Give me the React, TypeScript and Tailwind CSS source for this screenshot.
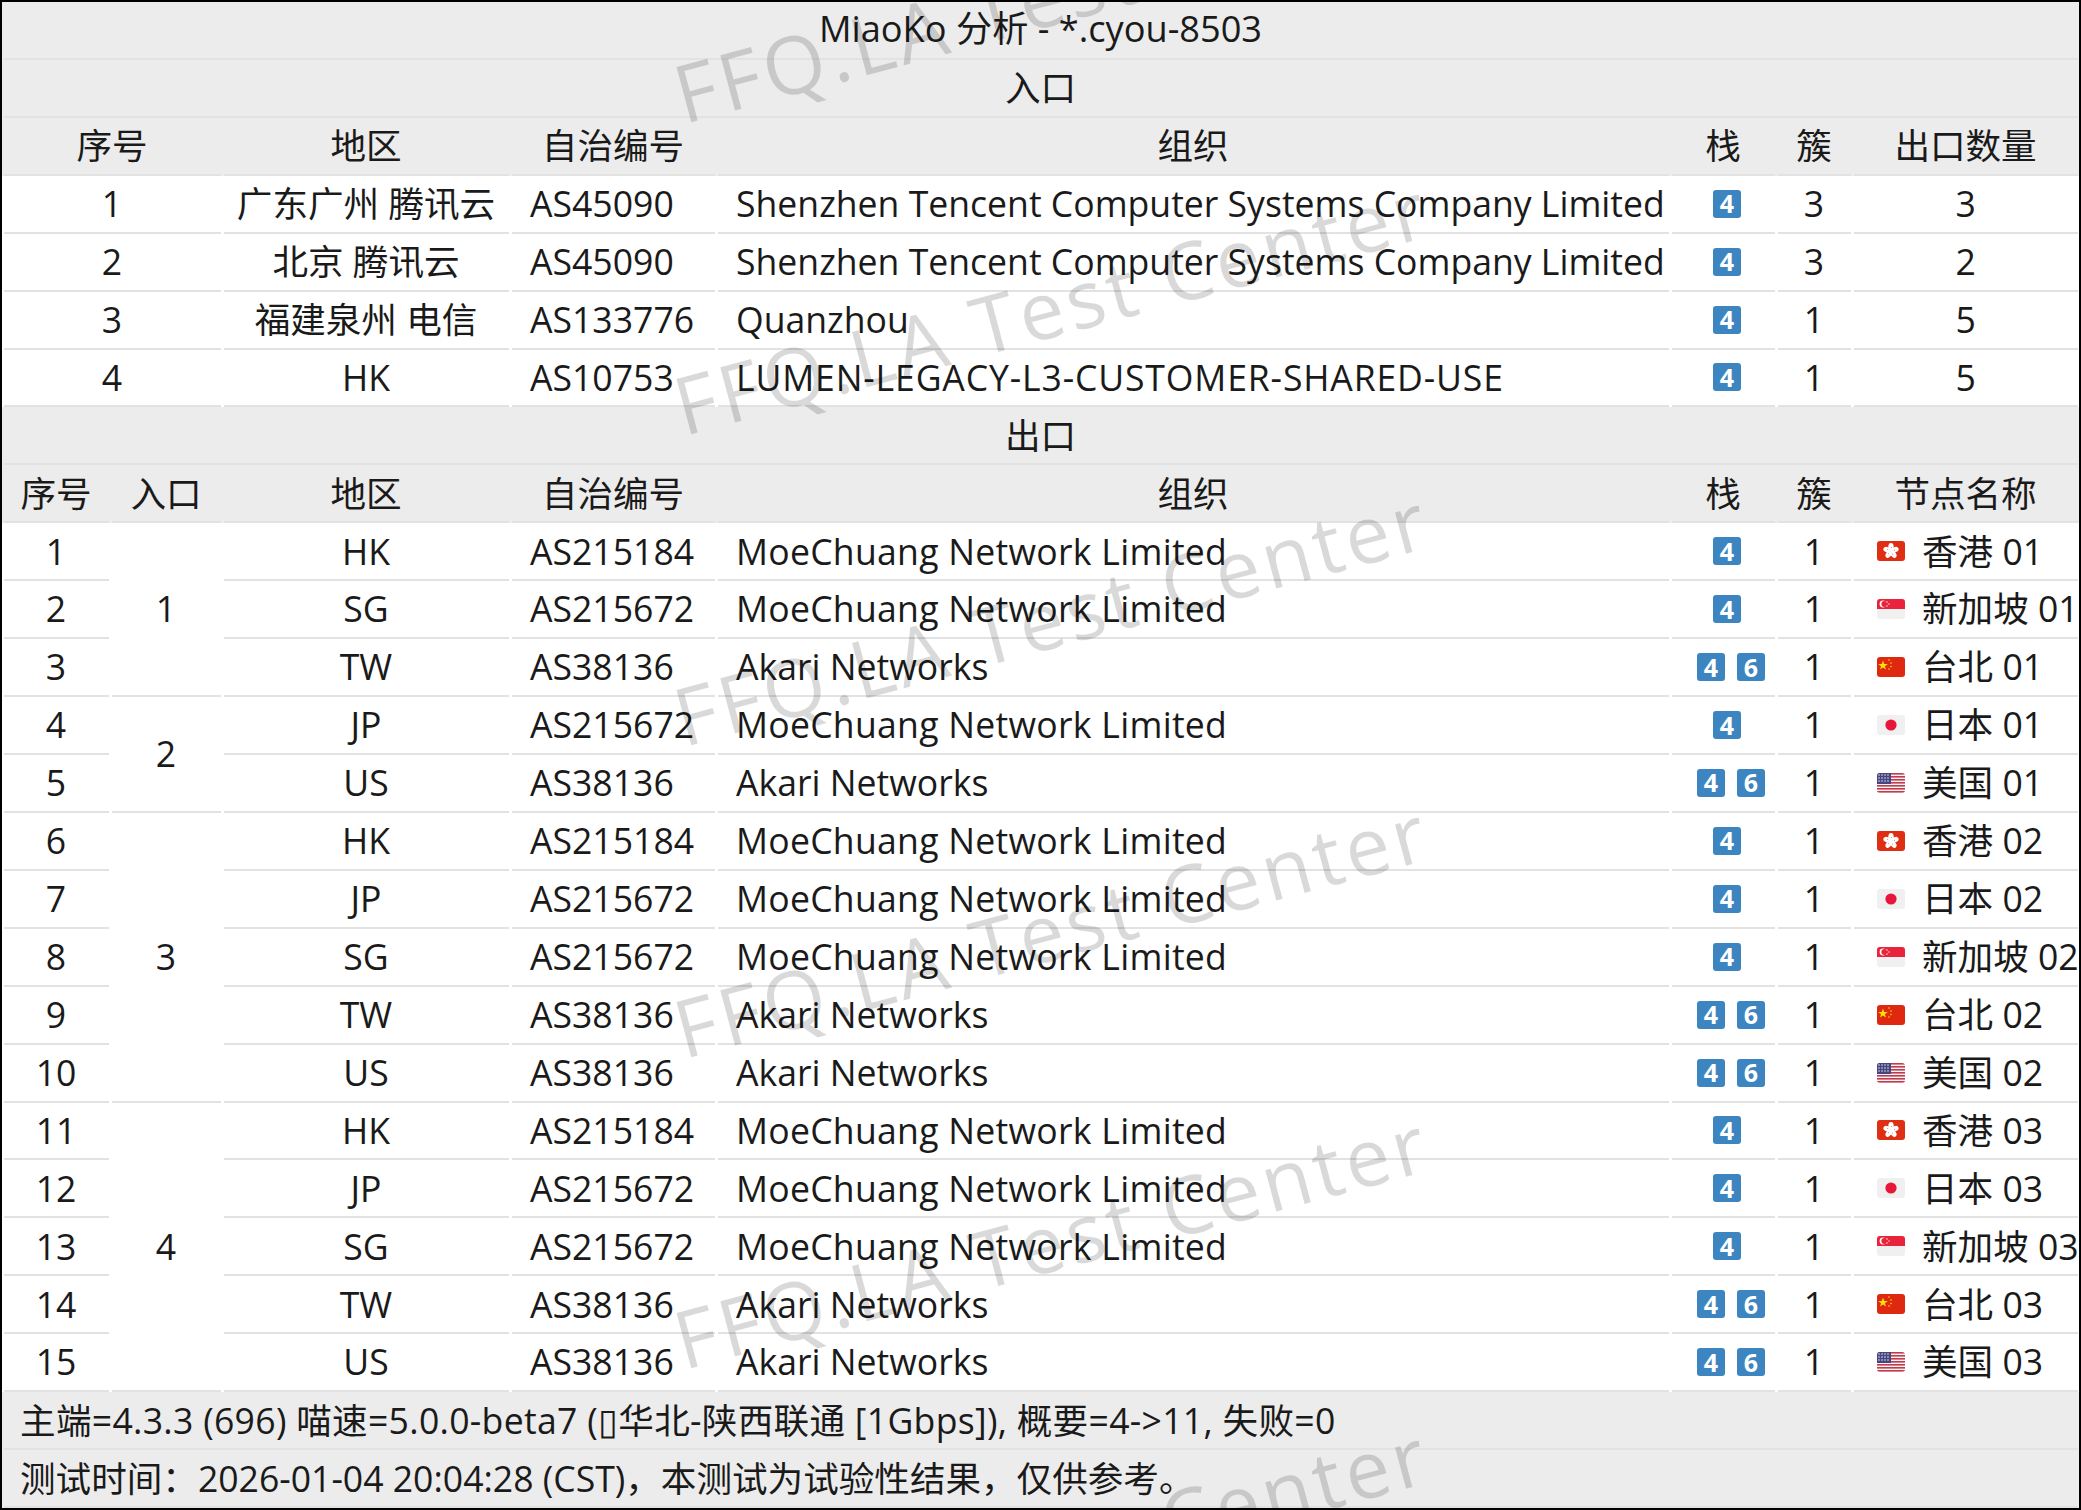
import React from 'react';

const FONT = '"Open Sans", "Noto Sans CJK SC", sans-serif';

const ingress = [
  { no: 1, region: '广东广州 腾讯云', asn: 'AS45090', org: 'Shenzhen Tencent Computer Systems Company Limited', stack: [4], cluster: 3, count: 3 },
  { no: 2, region: '北京 腾讯云', asn: 'AS45090', org: 'Shenzhen Tencent Computer Systems Company Limited', stack: [4], cluster: 3, count: 2 },
  { no: 3, region: '福建泉州 电信', asn: 'AS133776', org: 'Quanzhou', stack: [4], cluster: 1, count: 5 },
  { no: 4, region: 'HK', asn: 'AS10753', org: 'LUMEN-LEGACY-L3-CUSTOMER-SHARED-USE', stack: [4], cluster: 1, count: 5, caps: true },
];

const MOE = 'MoeChuang Network Limited';
const AKARI = 'Akari Networks';

const egress = [
  { region: 'HK', asn: 'AS215184', org: MOE, stack: [4], flag: 'hk', name: '香港 01', entry: 1, span: 3 },
  { region: 'SG', asn: 'AS215672', org: MOE, stack: [4], flag: 'sg', name: '新加坡 01' },
  { region: 'TW', asn: 'AS38136', org: AKARI, stack: [4, 6], flag: 'cn', name: '台北 01' },
  { region: 'JP', asn: 'AS215672', org: MOE, stack: [4], flag: 'jp', name: '日本 01', entry: 2, span: 2 },
  { region: 'US', asn: 'AS38136', org: AKARI, stack: [4, 6], flag: 'us', name: '美国 01' },
  { region: 'HK', asn: 'AS215184', org: MOE, stack: [4], flag: 'hk', name: '香港 02', entry: 3, span: 5 },
  { region: 'JP', asn: 'AS215672', org: MOE, stack: [4], flag: 'jp', name: '日本 02' },
  { region: 'SG', asn: 'AS215672', org: MOE, stack: [4], flag: 'sg', name: '新加坡 02' },
  { region: 'TW', asn: 'AS38136', org: AKARI, stack: [4, 6], flag: 'cn', name: '台北 02' },
  { region: 'US', asn: 'AS38136', org: AKARI, stack: [4, 6], flag: 'us', name: '美国 02' },
  { region: 'HK', asn: 'AS215184', org: MOE, stack: [4], flag: 'hk', name: '香港 03', entry: 4, span: 5 },
  { region: 'JP', asn: 'AS215672', org: MOE, stack: [4], flag: 'jp', name: '日本 03' },
  { region: 'SG', asn: 'AS215672', org: MOE, stack: [4], flag: 'sg', name: '新加坡 03' },
  { region: 'TW', asn: 'AS38136', org: AKARI, stack: [4, 6], flag: 'cn', name: '台北 03' },
  { region: 'US', asn: 'AS38136', org: AKARI, stack: [4, 6], flag: 'us', name: '美国 03' },
];

const Flag = ({ code }: { code: string }) => {
  const inner = () => {
    switch (code) {
      case 'hk':
        return (
          <>
            <rect width="28" height="20" fill="#de2f14" />
            {[0, 72, 144, 216, 288].map((a) => (
              <g key={a} transform={`rotate(${a} 14 10)`}>
                <ellipse cx="14" cy="6" rx="2.7" ry="3.9" fill="#fff" />
                <circle cx="14.4" cy="6.4" r="0.5" fill="#e06a55" />
              </g>
            ))}
          </>
        );
      case 'sg':
        return (
          <>
            <rect width="28" height="20" fill="#f0f0f0" />
            <rect width="28" height="10" fill="#e8233b" />
            <circle cx="6" cy="5" r="3.4" fill="#fff" />
            <circle cx="7.4" cy="5" r="3" fill="#e8233b" />
            <circle cx="10" cy="3" r="0.7" fill="#fff" />
            <circle cx="12" cy="5" r="0.7" fill="#fff" />
            <circle cx="10" cy="7" r="0.7" fill="#fff" />
          </>
        );
      case 'cn':
        return (
          <>
            <rect width="28" height="20" fill="#de2910" />
            <polygon points="6,3.5 7.2,7 10.8,7 7.9,9.2 9,12.6 6,10.5 3,12.6 4.1,9.2 1.2,7 4.8,7" fill="#ffde00" />
            <circle cx="12" cy="3" r="0.8" fill="#ffde00" />
            <circle cx="14" cy="6" r="0.8" fill="#ffde00" />
            <circle cx="14" cy="9.5" r="0.8" fill="#ffde00" />
            <circle cx="12" cy="12" r="0.8" fill="#ffde00" />
          </>
        );
      case 'jp':
        return (
          <>
            <rect width="28" height="20" fill="#f0f0f0" />
            <circle cx="14" cy="10" r="5.6" fill="#e8173a" />
          </>
        );
      default:
        return (
          <>
            <rect width="28" height="20" fill="#f4f4f4" />
            {[0, 3, 6, 9, 12, 15, 18].map((y) => (
              <rect key={y} y={y} width="28" height="1.6" fill="#c23a4c" />
            ))}
            <rect width="14" height="11" fill="#45467f" />
            {[2, 5, 8].map((y) =>
              [2, 5, 8, 11].map((x) => <circle key={`${x}-${y}`} cx={x} cy={y} r="0.8" fill="#dfe0ee" />)
            )}
          </>
        );
    }
  };
  return (
    <svg width="28" height="20" viewBox="0 0 28 20" className="shrink-0 rounded-[3px]">
      {inner()}
    </svg>
  );
};

const Badge = ({ value }: { value: number }) => (
  <span className="flex h-[28px] w-[28px] items-center justify-center rounded-[3px] bg-[#3d85c0] text-[25px] font-bold leading-none text-white">
    {value}
  </span>
);

const Stack = ({ values }: { values: number[] }) => (
  <div className={`flex items-center justify-center gap-[12px] ${values.length > 1 ? 'pl-[16px]' : 'pl-[8px]'}`}>
    {values.map((v) => (
      <Badge key={v} value={v} />
    ))}
  </div>
);

// cell with the broken bottom rule between columns
const cell = "relative px-0 py-0 align-middle after:absolute after:bottom-0 after:left-[2px] after:right-[1px] after:h-[2px] after:bg-[#e2e2e2] after:content-['']";
const center = `${cell} pb-[2px] text-center`;
const left = `${cell} pb-[2px] pl-[20px] text-left whitespace-nowrap`;
const rowH = 'h-[57.92px]';

const Full = ({ children, className }: { children: React.ReactNode; className?: string }) => (
  <tr className={`${rowH} bg-[#ececec]`}>
    <td colSpan={8} className={`${cell} whitespace-nowrap ${className ?? 'pb-[2px] text-center'}`}>
      {children}
    </td>
  </tr>
);

const App = () => {
  return (
    <div
      className="relative h-[1510px] w-[2081px] overflow-hidden border-2 border-black bg-white text-[35.6px] text-[#1a1a1a]"
      style={{ fontFamily: FONT }}
    >
      <table className="h-full w-full table-fixed border-collapse">
        <colgroup>
          <col className="w-[108px]" />
          <col className="w-[112px]" />
          <col className="w-[288px]" />
          <col className="w-[206px]" />
          <col className="w-[954px]" />
          <col className="w-[106px]" />
          <col className="w-[76px]" />
          <col className="w-[227px]" />
        </colgroup>
        <tbody>
          <Full className="pb-[5px] text-center text-[36.2px] leading-[48px]">MiaoKo 分析 - *.cyou-8503</Full>
          <Full>入口</Full>
          <tr className={`${rowH} bg-[#ececec]`}>
            <td colSpan={2} className={center}>序号</td>
            <td className={center}>地区</td>
            <td className={center}>自治编号</td>
            <td className={center}>组织</td>
            <td className={center}>栈</td>
            <td className={center}>簇</td>
            <td className={center}>出口数量</td>
          </tr>
          {ingress.map((r) => (
            <tr key={r.no} className={rowH}>
              <td colSpan={2} className={center}>{r.no}</td>
              <td className={center}>{r.region}</td>
              <td className={left}>{r.asn}</td>
              <td className={`${left} ${r.caps ? 'tracking-[0.85px]' : ''}`}>{r.org}</td>
              <td className={center}><Stack values={r.stack} /></td>
              <td className={center}>{r.cluster}</td>
              <td className={center}>{r.count}</td>
            </tr>
          ))}
          <Full>出口</Full>
          <tr className={`${rowH} bg-[#ececec]`}>
            <td className={center}>序号</td>
            <td className={center}>入口</td>
            <td className={center}>地区</td>
            <td className={center}>自治编号</td>
            <td className={center}>组织</td>
            <td className={center}>栈</td>
            <td className={center}>簇</td>
            <td className={center}>节点名称</td>
          </tr>
          {egress.map((r, i) => (
            <tr key={i} className={rowH}>
              <td className={center}>{i + 1}</td>
              {r.entry && <td rowSpan={r.span} className={center}>{r.entry}</td>}
              <td className={center}>{r.region}</td>
              <td className={left}>{r.asn}</td>
              <td className={`${left} ${r.org === MOE ? 'tracking-[0.27px]' : ''}`}>{r.org}</td>
              <td className={center}><Stack values={r.stack} /></td>
              <td className={center}>1</td>
              <td className={`${cell} pb-[2px]`}>
                <div className="flex items-center gap-[17px] whitespace-nowrap pl-[25px]">
                  <Flag code={r.flag} />
                  <span>{r.name}</span>
                </div>
              </td>
            </tr>
          ))}
          <Full className="pl-[18px] text-left tracking-[0.3px]">
            主端=4.3.3 (696) 喵速=5.0.0-beta7 (▯华北-陕西联通 [1Gbps]), 概要=4-&gt;11, 失败=0
          </Full>
          <Full className="pl-[18px] text-left">测试时间：2026-01-04 20:04:28 (CST)，本测试为试验性结果，仅供参考。</Full>
        </tbody>
      </table>

      {/* watermark */}
      <div className="pointer-events-none absolute inset-0">
        {[0, 1, 2, 3, 4, 5].map((k) => (
          <span
            key={k}
            className="absolute left-[684px] origin-bottom-left -rotate-[15deg] whitespace-nowrap text-[80px] leading-none tracking-[4px] text-black/15"
            style={{ top: 51 + k * 311.5 }}
          >
            FFQ.LA Test Center
          </span>
        ))}
      </div>
    </div>
  );
};

export default App;
